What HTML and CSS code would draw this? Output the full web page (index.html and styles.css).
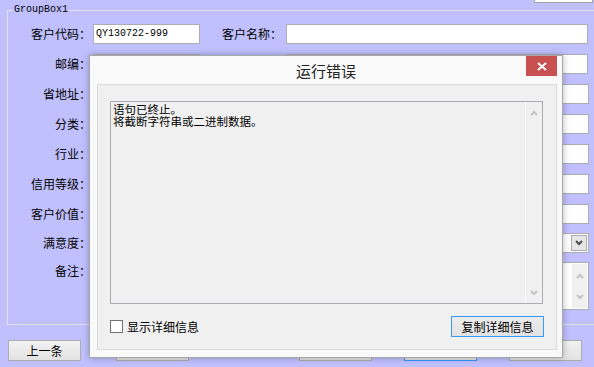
FILE: index.html
```html
<!DOCTYPE html>
<html lang="zh-CN">
<head>
  <meta charset="UTF-8">
  <title>客户资料</title>
  <link rel="stylesheet" href="styles.css">
</head>
<body>

  <!-- edge of the control above -->
  <div class="topbar"><div class="topbar-box"></div></div>

  <!-- Customer form -->
  <div class="group">
    <span class="group-title">GroupBox1</span>

    <div class="row">
      <label class="lbl">客户代码：</label><div class="field short">QY130722-999</div>
      <label class="lbl lbl2">客户名称：</label><div class="field long"></div>
    </div>
    <div class="row">
      <label class="lbl">邮编：</label><div class="field short"></div>
      <label class="lbl lbl2">联系电话：</label><div class="field long"></div>
    </div>
    <div class="row">
      <label class="lbl">省地址：</label><div class="field short"></div>
      <label class="lbl lbl2">详细地址：</label><div class="field long wide"></div>
    </div>
    <div class="row">
      <label class="lbl">分类：</label><div class="field short"></div>
      <label class="lbl lbl2">客户类型：</label><div class="field long wide"></div>
    </div>
    <div class="row">
      <label class="lbl">行业：</label><div class="field short"></div>
      <label class="lbl lbl2">企业规模：</label><div class="field long wide"></div>
    </div>
    <div class="row">
      <label class="lbl">信用等级：</label><div class="field short"></div>
      <label class="lbl lbl2">信用额度：</label><div class="field long wide"></div>
    </div>
    <div class="row row-tight">
      <label class="lbl">客户价值：</label><div class="field short"></div>
      <label class="lbl lbl2">年销售额：</label><div class="field long wide"></div>
    </div>
    <div class="row row-tight">
      <label class="lbl">满意度：</label>
      <div class="field combo">
        <span class="combo-btn">
          <svg width="8" height="6" viewBox="0 0 8 6"><polyline points="1,1 4,4 7,1" fill="none" stroke="#4a4a4a" stroke-width="2"/></svg>
        </span>
      </div>
    </div>
    <div class="row row-memo">
      <label class="lbl">备注：</label>
      <div class="field memo">
        <div class="memo-scroll">
          <svg width="8" height="6" viewBox="0 0 8 6"><polyline points="1,5 4,2 7,5" fill="none" stroke="#c4c4c4" stroke-width="2"/></svg>
          <svg width="8" height="6" viewBox="0 0 8 6"><polyline points="1,1 4,4 7,1" fill="none" stroke="#c4c4c4" stroke-width="2"/></svg>
        </div>
      </div>
    </div>
  </div>

  <!-- Navigation buttons -->
  <div class="nav">
    <button class="btn">上一条</button>
    <button class="btn b2">下一条</button>
    <button class="btn b3">新增</button>
    <button class="btn b4 default">保存</button>
    <button class="btn b5">关闭</button>
  </div>

  <!-- Error dialog -->
  <div class="dialog">
    <div class="dlg-head">
      运行错误
      <span class="dlg-close">
        <svg width="10" height="9" viewBox="0 0 10 9"><path d="M1 1 L9 8 M9 1 L1 8" stroke="#fff" stroke-width="2"/></svg>
      </span>
    </div>
    <div class="dlg-panel">
      <div class="msg">
        <div class="msg-text">语句已终止。<br>将截断字符串或二进制数据。</div>
        <div class="msg-scroll">
          <svg width="8" height="6" viewBox="0 0 8 6"><polyline points="1,5 4,2 7,5" fill="none" stroke="#c4c4c4" stroke-width="2"/></svg>
          <svg width="8" height="6" viewBox="0 0 8 6"><polyline points="1,1 4,4 7,1" fill="none" stroke="#c4c4c4" stroke-width="2"/></svg>
        </div>
      </div>
      <div class="dlg-foot">
        <label class="check"><span class="box"></span>显示详细信息</label>
        <button class="copy-btn">复制详细信息</button>
      </div>
    </div>
  </div>

</body>
</html>
```

FILE: styles.css
```css
body {
  margin: 0;
  width: 594px;
  height: 367px;
  overflow: hidden;
  position: relative;
  background: #c0c0ff;
  font-family: "Noto Sans CJK SC", sans-serif;
  font-size: 12px;
  color: #000;
}

.topbar {
  height: 3px;
  display: flex;
  justify-content: flex-end;
}

.topbar-box {
  width: 57px;
  height: 2px;
  margin-right: 1px;
  background: #fff;
  border: 1px solid #a0a0a0;
  border-top: none;
}

/* Group box */
.group {
  position: relative;
  margin: 7px 0 0 7px;
  width: 600px;
  height: 300px;
  padding-top: 13px;
  border: 1px solid #e2e2ec;
  border-right: none;
}

.group-title {
  position: absolute;
  top: -7px;
  left: 5px;
  padding: 0 1px;
  background: #c0c0ff;
  font: 10px/12px "Liberation Mono", monospace;
  color: #000;
}

.row {
  display: flex;
  align-items: center;
  height: 20px;
  margin-bottom: 10px;
}

.row-tight {
  margin-bottom: 9px;
}

.row-memo {
  height: 48px;
  align-items: flex-start;
}

.row-memo .lbl {
  padding-top: 1px;
}

.lbl {
  flex: none;
  width: 83px;
  text-align: right;
  line-height: 16px;
}

.lbl2 {
  width: 82px;
}

.field {
  box-sizing: border-box;
  height: 20px;
  border: 1px solid #abadb3;
  background: #fff;
  flex: none;
}

.short {
  width: 107px;
  margin-left: 2px;
  padding-left: 2px;
  font: 10px/18px "Liberation Mono", monospace;
}

.long {
  width: 302px;
  margin-left: 4px;
}

.long.wide {
  width: 303px;
}

.combo {
  width: 496px;
  margin-left: 2px;
  display: flex;
  justify-content: flex-end;
  align-items: center;
  padding-right: 1px;
}

.combo-btn {
  box-sizing: border-box;
  width: 16px;
  height: 16px;
  border: 1px solid #acacac;
  background: #e6e6e6;
  display: flex;
  align-items: center;
  justify-content: center;
}

.memo {
  width: 496px;
  height: 48px;
  margin-left: 2px;
  display: flex;
  justify-content: flex-end;
  padding: 1px;
}

.memo-scroll {
  width: 15px;
  background: #f0f0f0;
  display: flex;
  flex-direction: column;
  justify-content: space-between;
  align-items: center;
  padding: 9px 0 8px;
}

/* Buttons under the group */
.nav {
  display: flex;
  margin-top: 15px;
}

.btn {
  box-sizing: border-box;
  width: 73px;
  height: 21px;
  margin: 0 0 0 8px;
  padding: 0;
  border: 1px solid #acacac;
  background: linear-gradient(#f2f2f2, #e2e2e2);
  font-family: "Noto Sans CJK SC", sans-serif;
  font-size: 12px;
  color: #000;
}

.b2 { margin-left: 35px; }
.b3 { margin-left: 110px; }
.b4 { margin-left: 32px; }
.b5 { margin-left: 32px; }

.default {
  border-color: #3399ff;
}

/* Error dialog */
.dialog {
  position: absolute;
  left: 89px;
  top: 55px;
  width: 474px;
  height: 303px;
  box-sizing: border-box;
  border: 1px solid #a8a8a8;
  background: #f9f9f9;
  box-shadow: 0 0 7px rgba(0, 0, 0, 0.28);
  display: flex;
  flex-direction: column;
}

.dlg-head {
  position: relative;
  height: 28px;
  flex: none;
  display: flex;
  align-items: center;
  justify-content: center;
  font-size: 15px;
  color: #222;
}

.dlg-close {
  position: absolute;
  top: 0;
  right: 5px;
  width: 31px;
  height: 20px;
  background: #c75050;
  display: flex;
  align-items: center;
  justify-content: center;
}

.dlg-panel {
  flex: 1;
  margin: 0 5px 7px 7px;
  padding: 16px 13px 12px 12px;
  border: 1px solid #dadada;
  background: #f0f0f0;
  display: flex;
  flex-direction: column;
}

.msg {
  height: 203px;
  box-sizing: border-box;
  border: 1px solid #abadb3;
  display: flex;
}

/* the message keeps the tight 12px line pitch of the original dialog */
.msg-text {
  flex: 1;
  padding: 1px 2px;
  font-size: 11.5px;
  line-height: 12px;
}

.msg-scroll {
  width: 16px;
  border-left: 1px solid #fafafa;
  display: flex;
  flex-direction: column;
  justify-content: space-between;
  align-items: center;
  padding: 8px 0 7px;
}

.dlg-foot {
  margin-top: 12px;
  height: 21px;
  display: flex;
  justify-content: space-between;
  align-items: center;
}

.check {
  display: flex;
  align-items: center;
  gap: 4px;
  font-size: 12px;
}

.box {
  box-sizing: border-box;
  width: 13px;
  height: 13px;
  border: 1px solid #707070;
  background: #fff;
}

.copy-btn {
  box-sizing: border-box;
  width: 93px;
  height: 21px;
  margin-right: -1px;
  padding: 0;
  border: 1px solid #3399ff;
  background: linear-gradient(#ececec, #e2e2e2);
  font-family: "Noto Sans CJK SC", sans-serif;
  font-size: 12px;
  color: #000;
}
```
